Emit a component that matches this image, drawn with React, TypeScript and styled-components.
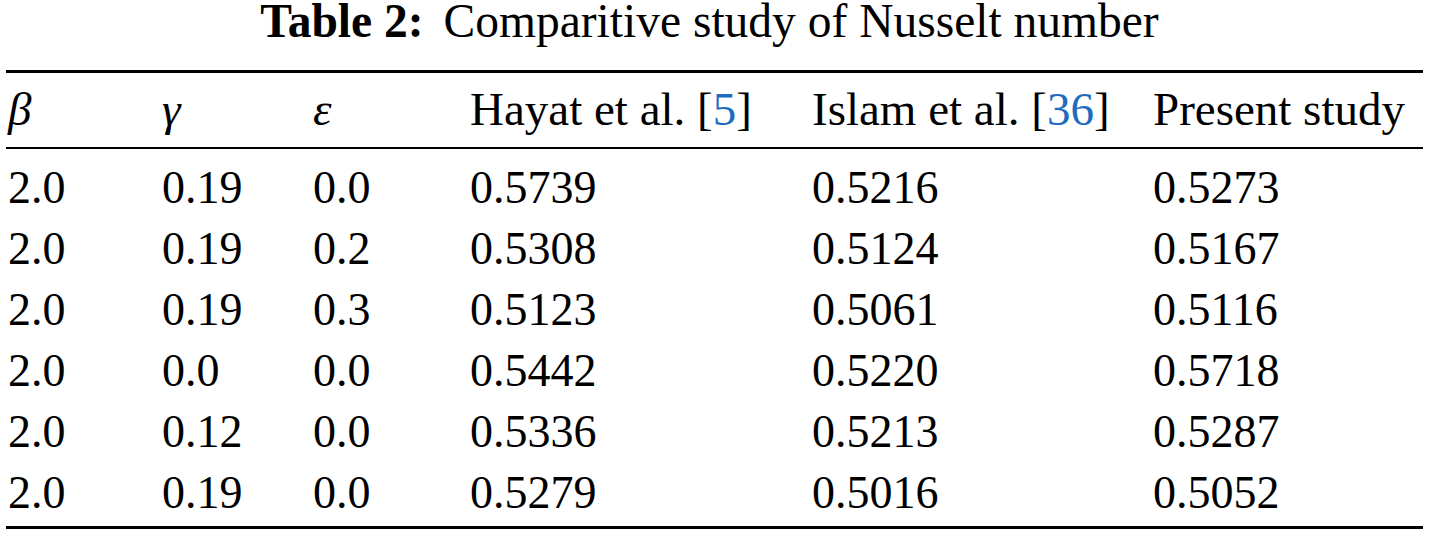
import React, { FunctionComponent } from "react";
import styled, { createGlobalStyle } from "styled-components";

const GlobalStyle = createGlobalStyle`
  html, body {
    margin: 0;
    padding: 0;
    background: #ffffff;
  }
  body {
    font-family: "Liberation Serif", "Times New Roman", serif;
    color: #000000;
  }
`

const Page = styled.div`
  width: 1417px;
  padding-left: 6px;
`

const Caption = styled.div`
  font-size: 47.5px;
  line-height: 43px;
  height: 43px;
  text-align: center;
  padding-right: 10px;
  margin-bottom: 27px;
  white-space: nowrap;
`

const CaptionLabel = styled.span`
  font-weight: bold;
  margin-right: 20px;
`

const Rule = styled.div<{ $thick: number }>`
  height: ${props => props.$thick}px;
  background: #000000;
`

const Rows = styled.div<{ $top: number; $bottom: number; $size: number }>`
  display: grid;
  grid-template-columns: 154px 151px 157px 342px 341px 1fr;
  padding: ${props => props.$top}px 0 ${props => props.$bottom}px 2px;
  font-size: ${props => props.$size}px;
  line-height: 61px;
`

const Cell = styled.div`
  white-space: nowrap;
`

const Symbol = styled.span`
  font-style: italic;
`

const Cite = styled.span`
  color: #1f6bbf;
`

const rows = [
  ["2.0", "0.19", "0.0", "0.5739", "0.5216", "0.5273"],
  ["2.0", "0.19", "0.2", "0.5308", "0.5124", "0.5167"],
  ["2.0", "0.19", "0.3", "0.5123", "0.5061", "0.5116"],
  ["2.0", "0.0", "0.0", "0.5442", "0.5220", "0.5718"],
  ["2.0", "0.12", "0.0", "0.5336", "0.5213", "0.5287"],
  ["2.0", "0.19", "0.0", "0.5279", "0.5016", "0.5052"],
]

const App: FunctionComponent = () => {
  return <>
    <GlobalStyle />
    <Page>
      <Caption>
        <CaptionLabel>Table 2:</CaptionLabel>
        Comparitive study of Nusselt number
      </Caption>
      <Rule $thick={3} />
      <Rows $top={6} $bottom={7} $size={47}>
        <Cell><Symbol>β</Symbol></Cell>
        <Cell><Symbol>γ</Symbol></Cell>
        <Cell><Symbol>ε</Symbol></Cell>
        <Cell>Hayat et al. [<Cite>5</Cite>]</Cell>
        <Cell>Islam et al. [<Cite>36</Cite>]</Cell>
        <Cell>Present study</Cell>
      </Rows>
      <Rule $thick={2} />
      <Rows $top={8} $bottom={3} $size={46}>
        {rows.map((row, i) => row.map((value, j) => (
          <Cell key={i + "-" + j}>{value}</Cell>
        )))}
      </Rows>
      <Rule $thick={3} />
    </Page>
  </>
}

export default App
